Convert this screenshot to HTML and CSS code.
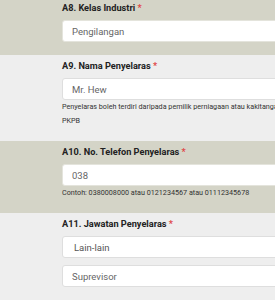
FILE: index.html
```html
<!DOCTYPE html>
<html>
<head>
<meta charset='UTF-8'>
<link rel="stylesheet" href="styles.css">
</head>
<body>
<div class='form'>
<div class='field olive'>
<label class='label'>A8. Kelas Industri <span class='req'>*</span></label>
<input class='box' type='text' value='Pengilangan'>
</div>
<div class='field'>
<label class='label'>A9. Nama Penyelaras <span class='req'>*</span></label>
<input class='box' type='text' value='Mr. Hew'>
<p class='help'>Penyelaras boleh terdiri daripada pemilik perniagaan atau kakitangan syarikat yang berdaftar dengan PKPB</p>
</div>
<div class='field olive'>
<label class='label'>A10. No. Telefon Penyelaras <span class='req'>*</span></label>
<input class='box' type='text' value='038'>
<p class='help'>Contoh: 0380008000 atau 0121234567 atau 01112345678</p>
</div>
<div class='field'>
<label class='label'>A11. Jawatan Penyelaras <span class='req'>*</span></label>
<select class='box select'>
<option>Lain-lain</option>
</select>
<input class='box' type='text' value='Suprevisor'>
</div>
</div>
</body>
</html>
```
FILE: styles.css
```css
/* Page */

* {
    margin: 0;
    padding: 0;
    box-sizing: border-box;
}

html, body {
    overflow: hidden;
}

body {
    background: #eeeeee;
    font-family: Roboto, "Liberation Sans", sans-serif;
}

.form {
    margin-top: -3px;
}

/* Sections */

.field {
    display: flex;
    flex-direction: column;
    width: 430px;
    padding: 4px 0 13px 62px;
    background: #eeeeee;
}

.olive {
    background: #d4d4c7;
}

.label {
    font-size: 9.2px;
    font-weight: bold;
    line-height: 14px;
    color: #222;
    margin-bottom: 5px;
}

.req {
    color: #e04848;
}

/* Inputs */

.box {
    display: block;
    width: 100%;
    height: 22px;
    padding: 0 9px;
    font-family: inherit;
    font-size: 9.5px;
    color: #666;
    background: #fff;
    border: 1px solid #dedede;
    border-radius: 3px;
    outline: none;
}

.olive .box {
    border-color: #e4e4dc;
}

.select {
    -webkit-appearance: none;
    appearance: none;
    padding-left: 11px;
    color: #555;
    margin-bottom: 7px;
}

.help {
    font-size: 7.2px;
    line-height: 14px;
    color: #333;
    width: 335px;
}
```
